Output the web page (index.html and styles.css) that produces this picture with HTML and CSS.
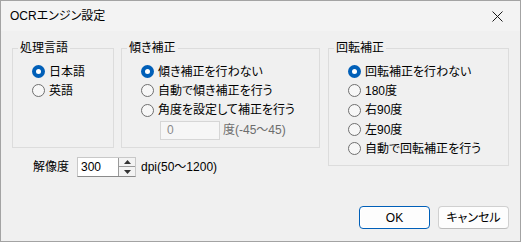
FILE: index.html
```html
<!DOCTYPE html>
<html lang="ja">
<head>
<meta charset="utf-8">
<title>OCRエンジン設定</title>
<link rel="stylesheet" href="styles.css">
</head>
<body>
<div class="window">
  <div class="titlebar">
    <span class="title">OCRエンジン設定</span>
    <span class="close"><svg width="11" height="11" viewBox="0 0 11 11"><path d="M0.5 0.5 L10.5 10.5 M10.5 0.5 L0.5 10.5" stroke="#1a1a1a" stroke-width="1" fill="none"/></svg></span>
  </div>
  <div class="content">
    <div class="main">
      <div class="leftcol">
        <div class="grouprow">
          <fieldset class="group g1">
            <legend>処理言語</legend>
            <div class="options">
              <div class="radio checked"><span class="dot"></span><span>日本語</span></div>
              <div class="radio"><span class="dot"></span><span>英語</span></div>
            </div>
          </fieldset>
          <fieldset class="group g2">
            <legend>傾き補正</legend>
            <div class="options">
              <div class="radio checked"><span class="dot"></span><span>傾き補正を行わない</span></div>
              <div class="radio"><span class="dot"></span><span>自動で傾き補正を行う</span></div>
              <div class="radio"><span class="dot"></span><span>角度を設定して補正を行う</span></div>
              <div class="anglerow">
                <span class="textbox disabled">0</span>
                <span class="hint disabled-text">度(-45〜45)</span>
              </div>
            </div>
          </fieldset>
        </div>
        <div class="resrow">
          <span class="reslabel">解像度</span>
          <span class="spin">
            <span class="spinvalue">300</span>
            <span class="spinbtns">
              <span class="spinbtn"><svg width="7" height="4" viewBox="0 0 7 4"><path d="M0 4 L3.5 0 L7 4 Z" fill="#333"/></svg></span>
              <span class="spinbtn"><svg width="7" height="4" viewBox="0 0 7 4"><path d="M0 0 L3.5 4 L7 0 Z" fill="#333"/></svg></span>
            </span>
          </span>
          <span class="unit">dpi(50〜1200)</span>
        </div>
      </div>
      <fieldset class="group g3">
        <legend>回転補正</legend>
        <div class="options">
          <div class="radio checked"><span class="dot"></span><span>回転補正を行わない</span></div>
          <div class="radio"><span class="dot"></span><span>180度</span></div>
          <div class="radio"><span class="dot"></span><span>右90度</span></div>
          <div class="radio"><span class="dot"></span><span>左90度</span></div>
          <div class="radio"><span class="dot"></span><span>自動で回転補正を行う</span></div>
        </div>
      </fieldset>
    </div>
    <div class="footer">
      <button class="btn primary">OK</button>
      <button class="btn">キャンセル</button>
    </div>
  </div>
</div>
</body>
</html>
```

FILE: styles.css
```css
* { box-sizing: border-box; }
html, body {
  margin: 0;
  padding: 0;
  background: #f0f0f0;
}
body {
  font-family: "Liberation Sans", "Noto Sans CJK JP", sans-serif;
  font-feature-settings: "palt";
  font-size: 12px;
  line-height: 16px;
  color: #000;
}
.window {
  width: 521px;
  height: 242px;
  border: 1px solid #a3a3a3;
  background: #f0f0f0;
  display: flex;
  flex-direction: column;
}
.titlebar {
  height: 30px;
  flex: none;
  background: #f3f3f3;
  display: flex;
  align-items: center;
  justify-content: space-between;
}
.title {
  padding-left: 9px;
  font-size: 12px;
}
.close {
  width: 46px;
  height: 30px;
  display: flex;
  align-items: center;
  justify-content: center;
}
.content {
  flex: 1;
  display: flex;
  flex-direction: column;
  padding: 9px 11px 12px 11px;
}
.main {
  display: flex;
  gap: 8px;
  align-items: flex-start;
}
.leftcol {
  display: flex;
  flex-direction: column;
}
.grouprow {
  display: flex;
  gap: 7px;
}
.group {
  margin: 0;
  padding: 6px 6px 7px 5px;
  border: 1px solid #dcdcdc;
  min-width: 0;
}
.group legend {
  padding: 0 2px;
  line-height: 16px;
}
.g1 { width: 102px; }
.g2 { width: 199px; }
.g3 { width: 181px; }
.options {
  margin-left: 14px;
  display: flex;
  flex-direction: column;
}
.radio {
  height: 19.3px;
  display: flex;
  align-items: center;
  gap: 4px;
  white-space: nowrap;
}
.dot {
  width: 13px;
  height: 13px;
  flex: none;
  border-radius: 50%;
  border: 1px solid #6f6f6f;
  background: #f7f7f7;
}
.radio.checked .dot {
  border: none;
  background: #005fb8;
  display: flex;
  align-items: center;
  justify-content: center;
}
.radio.checked .dot::after {
  content: "";
  width: 5px;
  height: 5px;
  border-radius: 50%;
  background: #fff;
}
.anglerow {
  margin-top: 1px;
  display: flex;
  align-items: center;
  gap: 3px;
  padding-left: 19px;
}
.textbox {
  width: 60px;
  height: 19px;
  border: 1px solid #d6d6d6;
  background: #f6f6f6;
  padding-left: 6px;
  display: flex;
  align-items: center;
}
.disabled { color: #8a8a8a; }
.disabled-text { color: #6d6d6d; }
.resrow {
  margin-top: 9px;
  margin-left: 21px;
  display: flex;
  align-items: center;
  height: 20px;
}
.reslabel { margin-right: 8px; }
.spin {
  display: flex;
  height: 20px;
  border: 1px solid #c8c8c8;
  border-bottom-color: #8a8a8a;
  background: #fff;
}
.spinvalue {
  width: 40px;
  padding-left: 3px;
  display: flex;
  align-items: center;
}
.spinbtns {
  width: 17px;
  display: flex;
  flex-direction: column;
  border-left: 1px solid #9a9a9a;
  background: #f3f3f3;
}
.spinbtn {
  flex: 1;
  display: flex;
  align-items: center;
  justify-content: center;
}
.spinbtn + .spinbtn { border-top: 1px solid #9a9a9a; }
.unit { margin-left: 5px; }
.footer {
  margin-top: auto;
  display: flex;
  justify-content: flex-end;
  gap: 8px;
  padding-right: 0;
}
.btn {
  width: 71px;
  height: 23px;
  font: inherit;
  color: #000;
  background: #fdfdfd;
  border: 1px solid #d0d0d0;
  border-bottom-color: #bcbcbc;
  border-radius: 4px;
  padding: 0;
}
.btn.primary {
  border: 1px solid #005fb8;
  box-shadow: inset 0 0 0 1px #ffffff;
  background: #fdfdfd;
}
```
